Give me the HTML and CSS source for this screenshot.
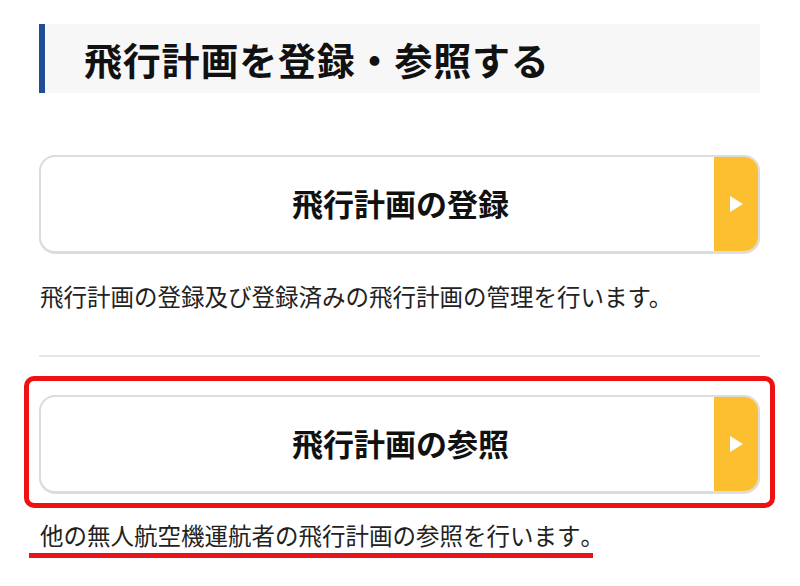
FILE: index.html
```html
<!DOCTYPE html>
<html lang="ja">
<head>
<meta charset="utf-8">
<link rel="stylesheet" href="styles.css">
</head>
<body>
<main class="page">
  <h1 class="section-title">飛行計画を登録・参照する</h1>

  <div class="item">
    <a class="nav-button" href="#">
      <span class="nav-label">飛行計画の登録</span>
      <span class="nav-arrow"><svg width="14" height="16" viewBox="0 0 14 16"><polygon points="1,0 14,8 1,16" fill="#fff"/></svg></span>
    </a>
    <p class="desc">飛行計画の登録及び登録済みの飛行計画の管理を行います。</p>
  </div>

  <hr class="divider">

  <div class="item">
    <div class="highlight">
      <a class="nav-button" href="#">
        <span class="nav-label">飛行計画の参照</span>
        <span class="nav-arrow"><svg width="14" height="16" viewBox="0 0 14 16"><polygon points="1,0 14,8 1,16" fill="#fff"/></svg></span>
      </a>
    </div>
    <p class="desc"><span class="marked">他の無人航空機運航者の飛行計画の参照を行います<span class="tail">。</span></span></p>
  </div>
</main>
</body>
</html>
```

FILE: styles.css
```css
* { box-sizing: border-box; }
html, body { margin: 0; padding: 0; background: #fff; }
body {
  font-family: "Noto Sans CJK JP", "Noto Sans", sans-serif;
  color: #111;
}
.page {
  width: 721px;
  margin-left: 39px;
  padding-top: 24px;
}
.section-title {
  margin: 0;
  height: 69px;
  display: flex;
  align-items: center;
  padding-left: 39px;
  border-left: 6px solid #1f4e96;
  background: #f7f7f7;
  font-size: 38px;
  font-weight: 700;
  letter-spacing: 0.8px;
  color: #111;
}
.section-title + .item { margin-top: 62px; }
.nav-button {
  display: flex;
  height: 98px;
  border: 2px solid #dcdcdc;
  border-radius: 16px;
  overflow: hidden;
  text-decoration: none;
  color: #111;
  background: #fff;
  box-shadow: 0 1px 0 #f3d6dc;
}
.nav-label {
  flex: 1;
  display: flex;
  align-items: center;
  justify-content: center;
  padding-left: 46px;
  padding-bottom: 4px;
  font-size: 31px;
  font-weight: 700;
}
.nav-arrow {
  width: 44px;
  background: #fbbf2f;
  display: flex;
  align-items: center;
  justify-content: center;
}
.desc {
  margin: 26px 0 0 1px;
  font-size: 23.5px;
  line-height: 34px;
  color: #222;
}
.divider {
  margin: 42px 0 0;
  border: 0;
  border-top: 2px solid #e6e6e6;
}
.highlight {
  margin: 19px -15px 0 -15px;
  border: 5px solid #ee1111;
  border-radius: 10px;
  padding: 14px 10px 10px;
}
.highlight + .desc { margin-top: 10px; }
.marked {
  display: inline-block;
  margin-left: -11px;
  padding: 0 0 3px 11px;
  border-bottom: 5px solid #e8141b;
  line-height: 30px;
}
.tail {
  display: inline-block;
  margin-right: -11px;
}
```
